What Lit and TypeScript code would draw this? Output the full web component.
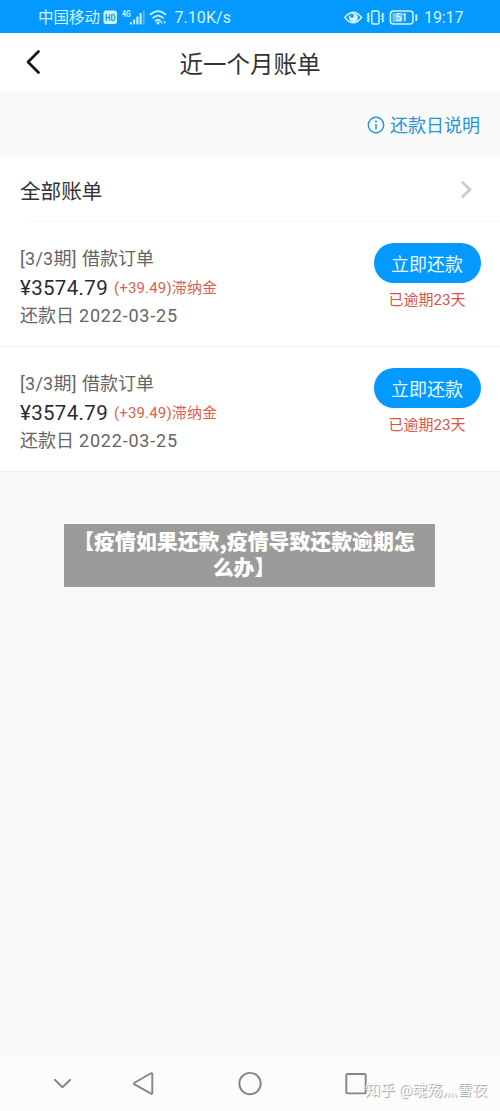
import { LitElement, html, css } from "lit";
import { customElement, property } from "lit/decorators.js";

const fontStack = css`"Roboto", "Noto Sans CJK SC", sans-serif`;

@customElement("status-bar")
class StatusBar extends LitElement {
  static styles = css`
    :host { display: flex; align-items: center; height: 33px; box-sizing: border-box; padding: 2px 37px 0 38px; background: #0499ff; color: #d4f3ff; font: 15.5px/30px ${fontStack}; white-space: nowrap; }
    svg { display: block; flex: none; overflow: visible; }
    .carrier { width: 64.5px; }
    .speed { margin-left: 8px; font-size: 16px; letter-spacing: 0.05px; padding-top: 1px; }
    .right { display: flex; align-items: center; margin-left: auto; }
    .time { width: 39px; margin-left: 6px; font-size: 16px; letter-spacing: -0.1px; }
    .hd { font: 700 9px "Roboto", sans-serif; fill: #0499ff; }
    .net { font: 700 9px "Roboto", sans-serif; fill: #d4f3ff; }
    .lvl { font: 500 11px "Roboto", sans-serif; fill: #e4f8ff; }
  `;
  render() {
    return html`
      <span class="carrier">中国移动</span>
      <svg width="64" height="18" viewBox="0 0 64 18">
        <rect x="0.5" y="1.5" width="13.5" height="13.5" rx="2.5" fill="#d4f3ff" />
        <text class="hd" x="2" y="11.5" textLength="10.500" lengthAdjust="spacingAndGlyphs">HD</text>
        <text class="net" x="19" y="7.5" textLength="8.5" lengthAdjust="spacingAndGlyphs">4G</text>
        <g fill="#d4f3ff">
          <rect x="27" y="13" width="2" height="2.5" rx=".7" />
          <rect x="30.2" y="10.5" width="2" height="5" rx=".7" />
          <rect x="33.4" y="7.5" width="2" height="8" rx=".7" />
          <rect x="36.6" y="4" width="2" height="11.5" rx=".7" />
          <rect x="39.8" y="1.5" width="1.8" height="14" rx=".7" opacity=".35" />
        </g>
        <g fill="none" stroke="#d4f3ff" stroke-width="1.7" stroke-linecap="round">
          <path d="M47.500 5.300Q55 -1.200 62.500 5.300" />
          <path d="M50 8.800Q55 4.300 60 8.800" />
          <path d="M52.500 11.800Q55 9.800 57.200 11.800" />
        </g>
        <circle cx="55" cy="14" r="1.5" fill="#d4f3ff" />
        <path d="M59.200 11.500v3.500l-1.800-1.750zM61 11.500v3.500l1.800-1.750z" fill="#d4f3ff" />
      </svg>
      <span class="speed">7.10K/s</span>
      <div class="right">
        <svg width="74" height="18" viewBox="0 0 74 18">
          <path d="M.8 8.500Q9.200 -2 17.600 8.500Q9.200 19 .8 8.500Z" fill="none" stroke="#d4f3ff" stroke-width="1.4" stroke-linejoin="round" />
          <circle cx="9.400" cy="8.600" r="4.500" fill="#d4f3ff" />
          <circle cx="8" cy="6.800" r="1.900" fill="#0499ff" />
          <g fill="none" stroke="#d4f3ff" stroke-width="1.5">
            <rect x="27.800" y="2" width="7.2" height="13" rx="1.2" />
            <path d="M25 4l-1.400 1.400 1.400 1.500-1.400 1.600 1.400 1.500-1.400 1.500 1.400 1.500" />
            <path d="M38 4l1.400 1.400-1.400 1.500 1.400 1.600-1.400 1.500 1.400 1.500-1.400 1.500" />
            <rect x="46.400" y="2" width="22.500" height="13" rx="3" />
            <path d="M72.300 5.500v6.500" stroke-width="1.900" />
          </g>
          <rect x="48.500" y="4" width="10" height="9" rx="1" fill="#6bc8ff" />
          <text class="lvl" x="51.500" y="12.400" textLength="12">51</text>
        </svg>
        <span class="time">19:17</span>
      </div>`;
  }
}

@customElement("bill-item")
class BillItem extends LitElement {
  @property() term = "";
  @property() amount = "";
  @property() fee = "";
  @property() date = "";
  @property() overdue = "";
  static styles = css`
    :host { display: flex; justify-content: space-between; height: 125px; box-sizing: border-box; padding: 21px 19.5px 0 20px; background: #fff; border-bottom: 1.5px solid #eee; font-family: ${fontStack}; white-space: nowrap; color: #666; }
    .info { padding-top: 1px; }
    .line { display: flex; height: 29px; line-height: 29px; font-size: 18px; }
    .term { letter-spacing: 0.25px; width: 62px; }
    .money { height: 30px; line-height: 30px; color: #2b2b2b; font-size: 20.5px; }
    .amount { width: 94px; letter-spacing: 0.35px; }
    .fee { font-size: 15px; letter-spacing: 0.15px; color: #dc5f50; }
    .num { letter-spacing: 0.8px; margin-left: 5px; }
    .date { height: 26px; line-height: 26px; }
    .side { width: 107px; display: flex; flex-direction: column; align-items: center; }
    button { width: 107px; height: 40px; border: 0; border-radius: 20px; padding: 4px 0 0; background: #0499ff; color: #e9faff; font: 18px/36px ${fontStack}; }
    .late { margin-top: 6px; font-size: 15px; line-height: 23px; color: #dc5348; }
  `;
  render() {
    return html`
      <div class="info">
        <div class="line"><span class="term">[${this.term}期]</span><span>借款订单</span></div>
        <div class="line money"><span class="amount">¥${this.amount}</span><span class="fee">(+${this.fee})滞纳金</span></div>
        <div class="line date"><span>还款日</span><span class="num">${this.date}</span></div>
      </div>
      <div class="side">
        <button>立即还款</button>
        <div class="late">已逾期${this.overdue}天</div>
      </div>`;
  }
}

@customElement("app-root")
class AppRoot extends LitElement {
  static styles = css`
    :host { position: relative; display: flex; flex-direction: column; height: 1111px; width: 500px; overflow: hidden; background: #f9f9f9; font-family: ${fontStack}; white-space: nowrap; }
    svg { display: block; flex: none; overflow: visible; }
    header { display: grid; grid-template-columns: 60px 1fr 60px; align-items: center; height: 58.5px; background: #fff; color: #333; }
    .back { margin-left: 24.5px; }
    h1 { margin: 5px 0 0; text-align: center; font-size: 23.5px; line-height: 34px; font-weight: 400; }
    .notice { display: flex; align-items: center; justify-content: flex-end; gap: 5px; height: 65.5px; box-sizing: border-box; padding: 4px 20px 0 0; color: #1f96dc; font-size: 18px; line-height: 26px; }
    .all { display: flex; align-items: center; justify-content: space-between; height: 65px; box-sizing: border-box; padding: 3px 28px 0 20px; background: linear-gradient(#f7f7f7, #f7f7f7) 27px 100% / 473px 1px no-repeat #fff; color: #333; font-size: 20.6px; line-height: 30px; }
    .all span { padding-top: 1px; }
    .all svg { margin-bottom: 2px; }
    .banner { position: absolute; left: 64px; top: 524px; width: 371px; height: 63px; box-sizing: border-box; padding: 3px 20px 0 9px; background: #9b9b9b; color: #fff; text-align: center; text-spacing-trim: space-all; font: 900 20.9px/26px "Noto Sans CJK SC", sans-serif; }
    nav { margin-top: auto; height: 55px; background: #fcfcfc; }
    .mark { position: absolute; left: 365px; top: 1079px; font-size: 15px; line-height: 22px; color: #fdfdfd; text-shadow: 1px 1px 1px #999; }
  `;
  render() {
    return html`
      <status-bar></status-bar>
      <header>
        <svg class="back" width="16" height="24" viewBox="0 0 16 24"><path d="M13.500 1.500L3 12L13.500 22.500" fill="none" stroke="#111" stroke-width="2.700" stroke-linecap="round" stroke-linejoin="round" /></svg>
        <h1>近一个月账单</h1>
      </header>
      <div class="notice">
        <svg width="18" height="18" viewBox="0 0 18 18"><circle cx="9" cy="8" r="7.700" fill="none" stroke="currentColor" stroke-width="1.400" /><circle cx="9" cy="4.600" r="1" fill="currentColor" /><path d="M9 7v5.300" stroke="currentColor" stroke-width="1.500" /></svg>
        <span>还款日说明</span>
      </div>
      <div class="all">
        <span>全部账单</span>
        <svg width="11" height="18" viewBox="0 0 11 18"><path d="M1.700 1.500L9 8.500L1.700 15.500" fill="none" stroke="#ccc" stroke-width="2.800" stroke-linecap="round" stroke-linejoin="round" /></svg>
      </div>
      <bill-item term="3/3" amount="3574.79" fee="39.49" date="2022-03-25" overdue="23"></bill-item>
      <bill-item term="3/3" amount="3574.79" fee="39.49" date="2022-03-25" overdue="23"></bill-item>
      <nav>
        <svg width="500" height="55" viewBox="0 0 500 55" fill="none" stroke="#858585" stroke-width="1.900" stroke-linecap="round" stroke-linejoin="round">
          <path d="M54.800 23.800l7.700 7.400 7.700-7.400" />
          <path d="M151 17.300q1.300-.6 1.300.8v18.800q0 1.400-1.300.8L134.500 28.400q-1.200-.8 0-1.600Z" />
          <circle cx="250" cy="27.600" r="10.700" />
          <rect x="346.300" y="18" width="19.400" height="19.400" rx="1" />
        </svg>
      </nav>
      <div class="banner">【疫情如果还款,疫情导致还款逾期怎<br />么办】</div>
      <div class="mark">知乎 @魂殇灬雪夜</div>`;
  }
}
